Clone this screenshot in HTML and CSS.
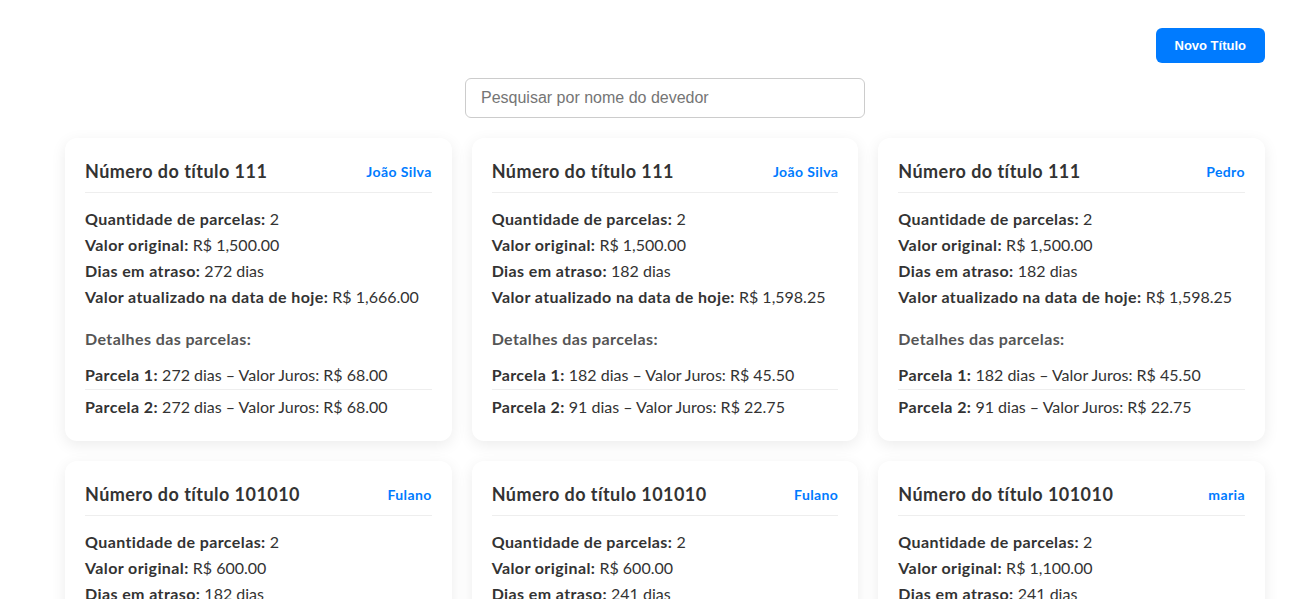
FILE: index.html
```html
<!DOCTYPE html>
<html lang="pt-BR">
<head>
<meta charset="utf-8">
<title>Títulos</title>
<link rel="stylesheet" href="styles.css">
</head>
<body>
<div class="page">
  <div class="topbar">
    <button class="btn-new">Novo Título</button>
  </div>
  <div class="search-row">
    <input class="search" type="text" placeholder="Pesquisar por nome do devedor">
  </div>
  <div class="grid">
    <div class="card">
      <div class="card-head"><h2>Número do título 111</h2><span class="debtor">João Silva</span></div>
      <p class="line"><b>Quantidade de parcelas:</b> 2</p>
      <p class="line"><b>Valor original:</b> R$ 1,500.00</p>
      <p class="line"><b>Dias em atraso:</b> 272 dias</p>
      <p class="line"><b>Valor atualizado na data de hoje:</b> R$ 1,666.00</p>
      <h3 class="details">Detalhes das parcelas:</h3>
      <ul class="parcelas">
        <li><b>Parcela 1:</b> 272 dias – Valor Juros: R$ 68.00</li>
        <li><b>Parcela 2:</b> 272 dias – Valor Juros: R$ 68.00</li>
      </ul>
    </div>
    <div class="card">
      <div class="card-head"><h2>Número do título 111</h2><span class="debtor">João Silva</span></div>
      <p class="line"><b>Quantidade de parcelas:</b> 2</p>
      <p class="line"><b>Valor original:</b> R$ 1,500.00</p>
      <p class="line"><b>Dias em atraso:</b> 182 dias</p>
      <p class="line"><b>Valor atualizado na data de hoje:</b> R$ 1,598.25</p>
      <h3 class="details">Detalhes das parcelas:</h3>
      <ul class="parcelas">
        <li><b>Parcela 1:</b> 182 dias – Valor Juros: R$ 45.50</li>
        <li><b>Parcela 2:</b> 91 dias – Valor Juros: R$ 22.75</li>
      </ul>
    </div>
    <div class="card">
      <div class="card-head"><h2>Número do título 111</h2><span class="debtor">Pedro</span></div>
      <p class="line"><b>Quantidade de parcelas:</b> 2</p>
      <p class="line"><b>Valor original:</b> R$ 1,500.00</p>
      <p class="line"><b>Dias em atraso:</b> 182 dias</p>
      <p class="line"><b>Valor atualizado na data de hoje:</b> R$ 1,598.25</p>
      <h3 class="details">Detalhes das parcelas:</h3>
      <ul class="parcelas">
        <li><b>Parcela 1:</b> 182 dias – Valor Juros: R$ 45.50</li>
        <li><b>Parcela 2:</b> 91 dias – Valor Juros: R$ 22.75</li>
      </ul>
    </div>
    <div class="card">
      <div class="card-head"><h2>Número do título 101010</h2><span class="debtor">Fulano</span></div>
      <p class="line"><b>Quantidade de parcelas:</b> 2</p>
      <p class="line"><b>Valor original:</b> R$ 600.00</p>
      <p class="line"><b>Dias em atraso:</b> 182 dias</p>
      <p class="line"><b>Valor atualizado na data de hoje:</b> R$ 654.60</p>
    </div>
    <div class="card">
      <div class="card-head"><h2>Número do título 101010</h2><span class="debtor">Fulano</span></div>
      <p class="line"><b>Quantidade de parcelas:</b> 2</p>
      <p class="line"><b>Valor original:</b> R$ 600.00</p>
      <p class="line"><b>Dias em atraso:</b> 241 dias</p>
      <p class="line"><b>Valor atualizado na data de hoje:</b> R$ 672.30</p>
    </div>
    <div class="card">
      <div class="card-head"><h2>Número do título 101010</h2><span class="debtor">maria</span></div>
      <p class="line"><b>Quantidade de parcelas:</b> 2</p>
      <p class="line"><b>Valor original:</b> R$ 1,100.00</p>
      <p class="line"><b>Dias em atraso:</b> 241 dias</p>
      <p class="line"><b>Valor atualizado na data de hoje:</b> R$ 1,232.00</p>
    </div>
  </div>
</div>
</body>
</html>
```
FILE: styles.css
```css
* { box-sizing: border-box; }
body {
  margin: 0;
  background: #fff;
  font-family: "Lato", sans-serif;
  color: #333;
}
.page {
  max-width: 1215px;
  margin: 0 auto;
  padding: 28px 0 40px 15px;
}
.topbar {
  display: flex;
  justify-content: flex-end;
}
.btn-new {
  height: 35px;
  padding: 0 19px;
  border: none;
  border-radius: 6px;
  background: #007bff;
  color: #fff;
  font-family: "Liberation Sans", Arial, sans-serif;
  font-size: 13px;
  font-weight: bold;
  cursor: pointer;
}
.search-row {
  display: flex;
  justify-content: center;
  margin-top: 15px;
}
.search {
  width: 400px;
  height: 40px;
  padding: 0 15px;
  border: 1px solid #ccc;
  border-radius: 6px;
  font-family: "Liberation Sans", Arial, sans-serif;
  font-size: 16px;
  color: #333;
  outline: none;
}
.search::placeholder { color: #757575; }
.grid {
  margin-top: 20px;
  display: grid;
  grid-template-columns: repeat(3, 1fr);
  gap: 20px;
}
.card {
  background: #fff;
  border-radius: 12px;
  box-shadow: 0 4px 15px rgba(0, 0, 0, 0.08);
  padding: 20px;
}
.card b { letter-spacing: 0.4px; }
.card-head {
  display: flex;
  justify-content: space-between;
  align-items: center;
  padding-bottom: 8px;
  border-bottom: 1px solid #eee;
  margin-bottom: 13px;
}
.card-head h2 {
  margin: 0;
  font-size: 18px;
  line-height: 26px;
  font-weight: bold;
  letter-spacing: 0.45px;
  color: #333;
}
.debtor {
  color: #007bff;
  font-weight: bold;
  font-size: 14px;
  letter-spacing: 0.4px;
}
.line {
  margin: 0;
  font-size: 16px;
  line-height: 26px;
}
.details {
  margin: 16px 0 6px;
  font-size: 16px;
  line-height: 26px;
  color: #555;
  letter-spacing: 0.4px;
}
.parcelas {
  list-style: none;
  margin: 0;
  padding: 0;
}
.parcelas li {
  font-size: 16px;
  line-height: 24px;
  padding: 5px 0 2px;
  border-bottom: 1px solid #eee;
}
.parcelas li:last-child { border-bottom: none; }
```
